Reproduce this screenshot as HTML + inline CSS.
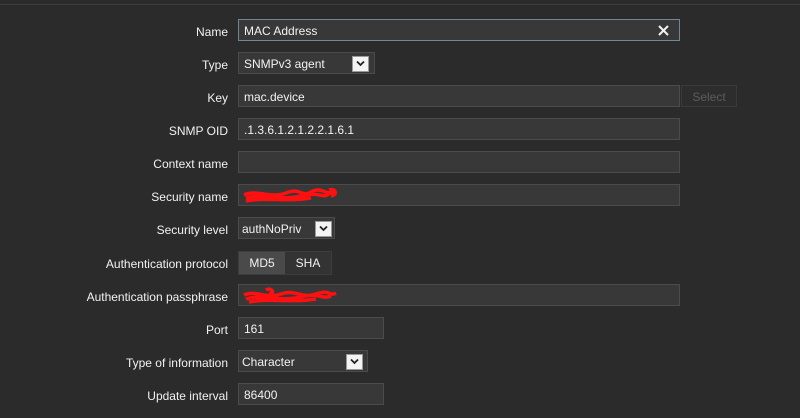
<!DOCTYPE html>
<html><head><meta charset="utf-8"><style>
body{margin:0;width:800px;height:418px;background:#2b2b2b;font-family:"Liberation Sans",Arial,sans-serif;font-size:12px;color:#f2f2f2;position:relative;overflow:hidden}
.line{position:absolute;left:0;top:4px;width:800px;height:1px;background:#3c3c3c}
.lbl{position:absolute;right:572px;text-align:right;white-space:nowrap;line-height:14px;margin-top:1px}
.in{position:absolute;left:238px;height:20px;background:#383838;border:1px solid #4b4b4b;box-sizing:content-box;line-height:22px;padding-left:5px;color:#f2f2f2}
.dd{position:absolute;top:3px;width:15px;height:14px;background:#f4f4f4;border:1px solid #999}
.dd svg{position:absolute;left:3px;top:3px}
</style></head><body>
<div class="line"></div>

<div class="lbl" style="top:24px">Name</div>
<div class="in" style="top:19px;width:435px;border-color:#6f8796">MAC Address
<svg style="position:absolute;right:10px;top:5px" width="11" height="11" viewBox="0 0 11 11"><path d="M1 1L10 10M10 1L1 10" stroke="#f2f2f2" stroke-width="2"/></svg></div>

<div class="lbl" style="top:57px">Type</div>
<div class="in" style="top:52px;width:130px">SNMPv3 agent<div class="dd" style="left:113px"><svg width="9" height="7"><path d="M1 1.5L4.5 5L8 1.5" stroke="#222" stroke-width="1.8" fill="none"/></svg></div></div>

<div class="lbl" style="top:90px">Key</div>
<div class="in" style="top:85px;width:435px">mac.device</div>
<div style="position:absolute;left:681px;top:85px;width:54px;height:20px;border:1px solid #393939;background:#2d2d2d;color:#5c5c5c;text-align:center;line-height:22px">Select</div>

<div class="lbl" style="top:123px">SNMP OID</div>
<div class="in" style="top:118px;width:435px">.1.3.6.1.2.1.2.2.1.6.1</div>

<div class="lbl" style="top:156px">Context name</div>
<div class="in" style="top:151px;width:435px"></div>

<div class="lbl" style="top:189px">Security name</div>
<div class="in" style="top:184px;width:435px"><svg style="position:absolute;left:2px;top:1px" width="100" height="20"><path d="M3 9C15 3 30 13 45 7S60 12 70 6S85 10 95 6M5 12C20 7 40 15 60 10S80 13 88 8M5 15C25 11 45 16 70 12M88 4C95 2 97 9 90 10" stroke="#ff1010" stroke-width="3.5" fill="none"/></svg></div>

<div class="lbl" style="top:222px">Security level</div>
<div class="in" style="top:217px;width:92px;padding-left:3px">authNoPriv<div class="dd" style="left:76px"><svg width="9" height="7"><path d="M1 1.5L4.5 5L8 1.5" stroke="#222" stroke-width="1.8" fill="none"/></svg></div></div>

<div class="lbl" style="top:256px">Authentication protocol</div>
<div style="position:absolute;left:238px;top:251px;width:92px;height:22px;border:1px solid #3d3d3d;background:#333"></div>
<div style="position:absolute;left:239px;top:252px;width:46px;height:22px;background:#4a4a4a;text-align:center;line-height:23px">MD5</div>
<div style="position:absolute;left:286px;top:252px;width:44px;height:22px;text-align:center;line-height:23px">SHA</div>

<div class="lbl" style="top:289px">Authentication passphrase</div>
<div class="in" style="top:284px;width:435px"><svg style="position:absolute;left:2px;top:0px" width="100" height="22"><path d="M3 10C15 5 25 14 40 9S60 14 75 9S88 12 95 8M5 14C20 9 40 17 60 12S80 15 90 11M8 17C30 13 50 18 75 14M25 5C30 2 35 8 28 9" stroke="#ff1010" stroke-width="3.5" fill="none"/></svg></div>

<div class="lbl" style="top:322px">Port</div>
<div class="in" style="top:317px;width:139px">161</div>

<div class="lbl" style="top:355px">Type of information</div>
<div class="in" style="top:350px;width:125px;padding-left:3px">Character<div class="dd" style="left:107px"><svg width="9" height="7"><path d="M1 1.5L4.5 5L8 1.5" stroke="#222" stroke-width="1.8" fill="none"/></svg></div></div>

<div class="lbl" style="top:388px">Update interval</div>
<div class="in" style="top:383px;width:139px">86400</div>
</body></html>
